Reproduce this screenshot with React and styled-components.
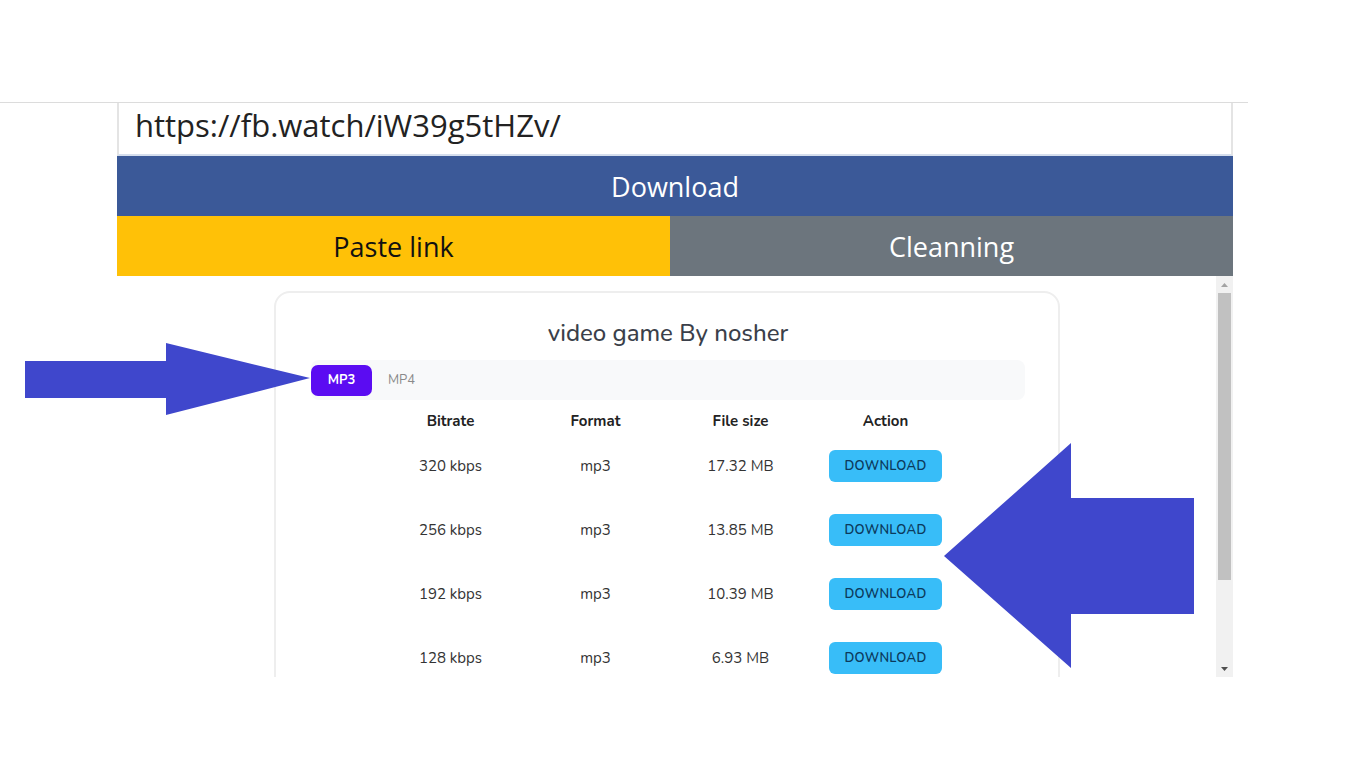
import React from "react";
import styled, { createGlobalStyle } from "styled-components";

const Global = createGlobalStyle`
  html, body { margin: 0; padding: 0; background: #fff; }
  body { width: 1366px; height: 768px; overflow: hidden; position: relative; }
`;

const Page = styled.div`
  padding-top: 102px;
  width: 1366px;
  height: 768px;
  box-sizing: border-box;
  position: relative;
`;

const Frame = styled.div`
  width: 1248px;
  border-top: 1px solid #dcdcdc;
  box-sizing: border-box;
`;

const Column = styled.div`
  margin-left: 117px;
  width: 1116px;
  display: flex;
  flex-direction: column;
`;

const UrlInput = styled.div`
  height: 53px;
  border-left: 2px solid #e4e4e4;
  border-right: 2px solid #e4e4e4;
  border-bottom: 2px solid #d5deed;
  box-sizing: border-box;
  padding-left: 16px;
  padding-top: 2px;
  display: flex;
  align-items: flex-start;
  font-family: "Open Sans", sans-serif;
  font-size: 31px;
  line-height: 40px;
  color: #222;
  width: 1116px;
`;

const Bar = styled.div`
  height: 60px;
  display: flex;
  align-items: center;
  justify-content: center;
  font-family: "Open Sans", sans-serif;
  font-size: 27px;
  color: ${(p) => p.$fg};
  background: ${(p) => p.$bg};
  flex: ${(p) => p.$flex || "none"};
  width: ${(p) => p.$w || "auto"};
`;

const Row = styled.div`
  display: flex;
`;

const Viewport = styled.div`
  height: 401px;
  display: flex;
`;

const Content = styled.div`
  flex: 1;
  overflow: hidden;
  padding-top: 15px;
  padding-left: 1px;
  display: flex;
  justify-content: center;
  align-items: flex-start;
`;

const Card = styled.div`
  width: 786px;
  height: 600px;
  border: 2px solid #eeeeee;
  border-radius: 16px;
  box-sizing: border-box;
  padding: 23px 33px 0 35px;
  font-family: "Nunito", "Lato", sans-serif;
`;

const Title = styled.div`
  text-align: center;
  font-size: 24px;
  font-weight: 500;
  color: #3b3f4a;
  height: 44px;
  line-height: 34px;
`;

const Tabs = styled.div`
  height: 40px;
  background: #f8f9fa;
  border-radius: 8px;
  display: flex;
  align-items: center;
  gap: 16px;
`;

const Tab = styled.div`
  height: 31px;
  padding: 0 ${(p) => (p.$active ? "15px" : "0")};
  width: ${(p) => (p.$active ? "61px" : "auto")};
  box-sizing: border-box;
  display: flex;
  align-items: center;
  justify-content: center;
  border-radius: 7px;
  font-size: 13px;
  font-weight: ${(p) => (p.$active ? 700 : 400)};
  color: ${(p) => (p.$active ? "#fff" : "#8a8a8a")};
  background: ${(p) => (p.$active ? "#5b0cf2" : "transparent")};
`;

const Table = styled.div`
  width: 580px;
  margin: 8px auto 0;
  display: grid;
  grid-template-columns: repeat(4, 145px);
  grid-auto-rows: 64px;
  grid-template-rows: 26px;
`;

const Cell = styled.div`
  display: flex;
  align-items: center;
  justify-content: center;
  font-size: 15px;
  font-weight: ${(p) => (p.$head ? 700 : 400)};
  color: ${(p) => (p.$head ? "#222" : "#333")};
`;

const DlButton = styled.div`
  width: 113px;
  height: 32px;
  border-radius: 6px;
  background: #38bdf8;
  color: #0c3a5c;
  font-size: 13px;
  font-weight: 600;
  letter-spacing: 0.3px;
  display: flex;
  align-items: center;
  justify-content: center;
`;

const Scrollbar = styled.div`
  width: 17px;
  background: #f1f1f1;
  display: flex;
  flex-direction: column;
  align-items: center;
`;

const ScrollArrow = styled.div`
  height: 17px;
  width: 17px;
  display: flex;
  align-items: center;
  justify-content: center;
`;

const Thumb = styled.div`
  width: 13px;
  height: 287px;
  background: #c1c1c1;
`;

const Spacer = styled.div`
  flex: 1;
`;

const Overlay = styled.svg`
  position: absolute;
  left: 0;
  top: 0;
  pointer-events: none;
`;

const rows = [
  ["320 kbps", "mp3", "17.32 MB"],
  ["256 kbps", "mp3", "13.85 MB"],
  ["192 kbps", "mp3", "10.39 MB"],
  ["128 kbps", "mp3", "6.93 MB"],
];

export default function App() {
  return (
    <>
      <Global />
      <Page>
        <Frame>
          <Column>
            <UrlInput>https://fb.watch/iW39g5tHZv/</UrlInput>
            <Bar $bg="#3b5998" $fg="#fff">Download</Bar>
            <Row>
              <Bar $bg="#ffc107" $fg="#111" $w="553px">Paste link</Bar>
              <Bar $bg="#6c757d" $fg="#fff" $flex="1">Cleanning</Bar>
            </Row>
            <Viewport>
              <Content>
                <Card>
                  <Title>video game By nosher</Title>
                  <Tabs>
                    <Tab $active>MP3</Tab>
                    <Tab>MP4</Tab>
                  </Tabs>
                  <Table>
                    <Cell $head>Bitrate</Cell>
                    <Cell $head>Format</Cell>
                    <Cell $head>File size</Cell>
                    <Cell $head>Action</Cell>
                    {rows.map((r) => (
                      <React.Fragment key={r[0]}>
                        <Cell>{r[0]}</Cell>
                        <Cell>{r[1]}</Cell>
                        <Cell>{r[2]}</Cell>
                        <Cell>
                          <DlButton>DOWNLOAD</DlButton>
                        </Cell>
                      </React.Fragment>
                    ))}
                  </Table>
                </Card>
              </Content>
              <Scrollbar>
                <ScrollArrow>
                  <svg width="7" height="4" viewBox="0 0 7 4"><path d="M0 4 L3.5 0 L7 4Z" fill="#a3a3a3" /></svg>
                </ScrollArrow>
                <Thumb />
                <Spacer />
                <ScrollArrow>
                  <svg width="7" height="4" viewBox="0 0 7 4"><path d="M0 0 L3.5 4 L7 0Z" fill="#505050" /></svg>
                </ScrollArrow>
              </Scrollbar>
            </Viewport>
          </Column>
        </Frame>
        <Overlay width="1366" height="768" viewBox="0 0 1366 768">
          <polygon
            points="25,361 166,361 166,343 310,378 166,415 166,398 25,398"
            fill="#3f47cc"
          />
          <polygon
            points="944,556 1071,443 1071,498 1194,498 1194,614 1071,614 1071,668"
            fill="#3f47cc"
          />
        </Overlay>
      </Page>
    </>
  );
}
